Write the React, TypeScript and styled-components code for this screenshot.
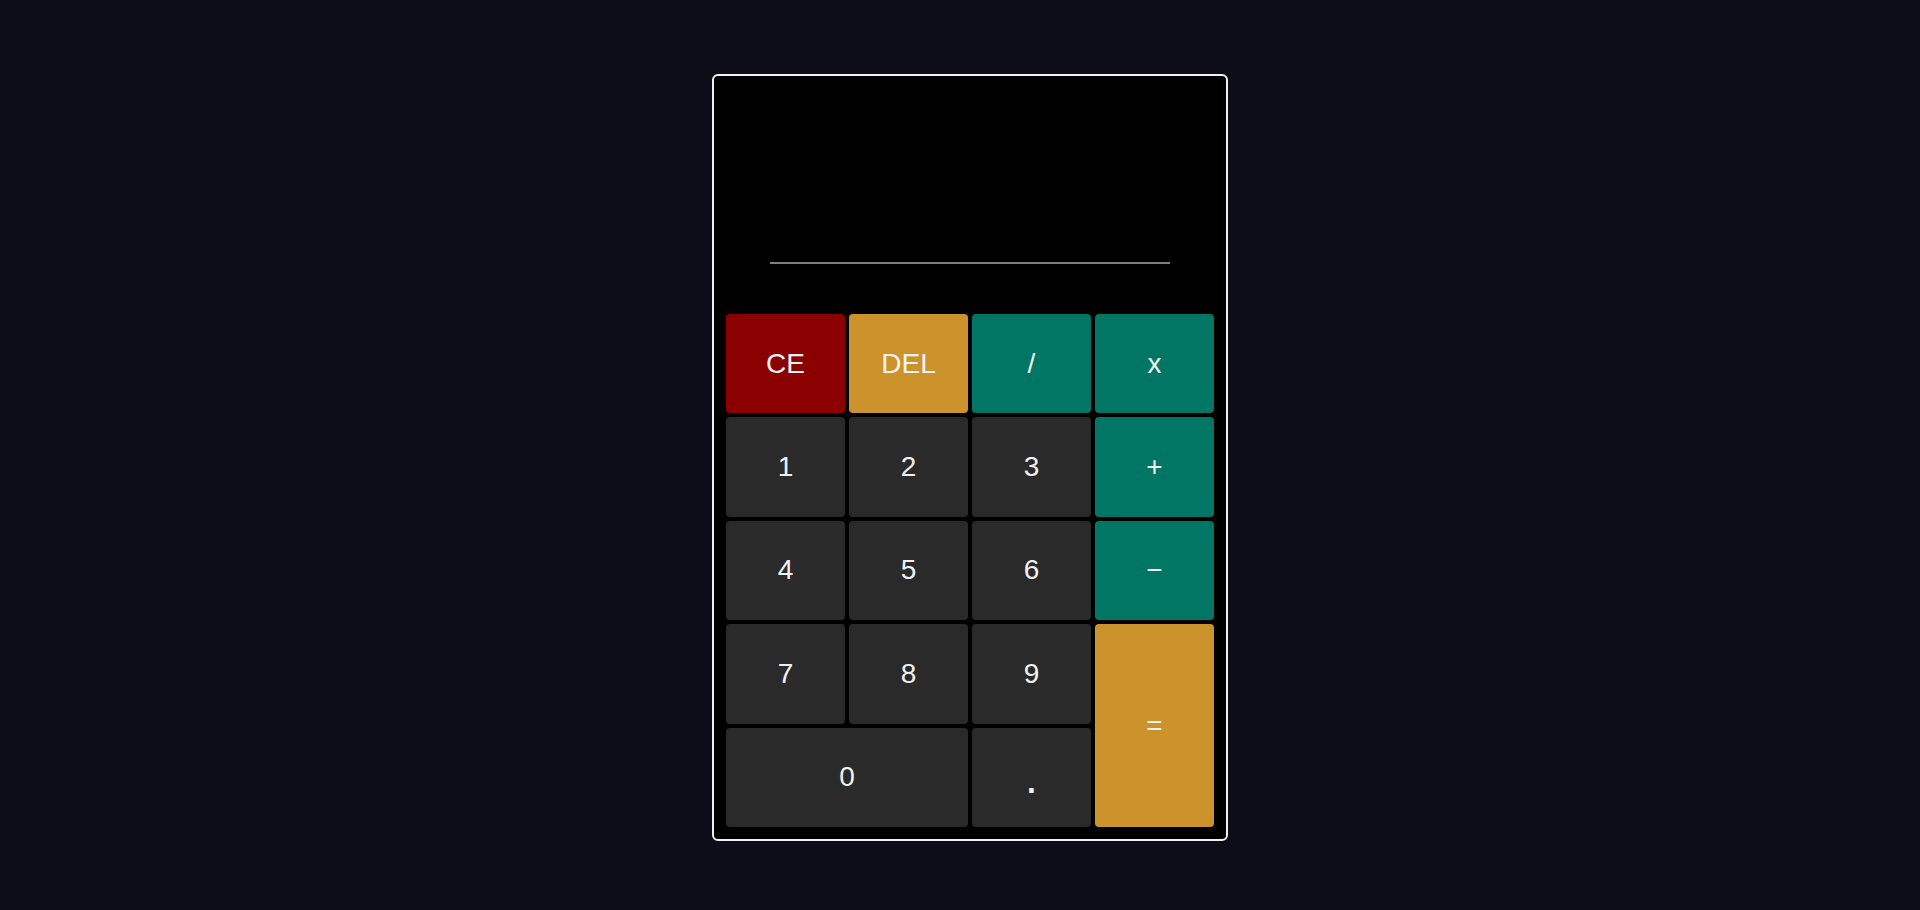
import styled, { createGlobalStyle } from "styled-components";

const GlobalStyle = createGlobalStyle`
  body {
    margin: 0;
    background: #0d0d1a;
    font-family: "Liberation Sans", Arial, sans-serif;
  }
`;

type Tone = "clear" | "gold" | "op" | "num";

const tones: Record<Tone, string> = {
  clear: "#8b0000",
  gold: "#cc922c",
  op: "#017664",
  num: "#2a2a2a",
};

const Page = styled.div`
  display: flex;
  justify-content: center;
  padding: 74px 0 0 20px;
`;

const Calculator = styled.div`
  width: 516px;
  height: 767px;
  background: #000;
  border: 2px solid #f2f2f2;
  border-radius: 6px;
  padding: 12px;
  box-sizing: border-box;
  display: flex;
  flex-direction: column;
`;

const Display = styled.div`
  height: 226px;
  display: flex;
  flex-direction: column;
  justify-content: flex-end;
  align-items: center;
  padding-bottom: 50px;
  box-sizing: border-box;
`;

const Screen = styled.div`
  width: 400px;
  height: 40px;
  border-bottom: 2px solid #7f7f7f;
  color: #fff;
  font-size: 28px;
  text-align: right;
`;

const Keys = styled.div`
  display: grid;
  grid-template-columns: repeat(4, 1fr);
  grid-template-rows: repeat(5, 1fr);
  gap: 4px;
  height: 513px;
`;

const Key = styled.button<{
  $tone: Tone;
  $wide?: boolean;
  $tall?: boolean;
  $big?: boolean;
}>`
  border: none;
  border-radius: 4px;
  background: ${(p) => tones[p.$tone]};
  color: #f2f2f2;
  font-family: "Liberation Sans", Arial, sans-serif;
  font-size: ${(p) => (p.$big ? "46px" : "28px")};
  padding: 0;
  cursor: pointer;
  grid-column: ${(p) => (p.$wide ? "span 2" : "auto")};
  grid-row: ${(p) => (p.$tall ? "span 2" : "auto")};
`;

export default function App() {
  return (
    <>
      <GlobalStyle />
      <Page>
        <Calculator>
          <Display>
            <Screen />
          </Display>
          <Keys>
            <Key $tone="clear">CE</Key>
            <Key $tone="gold">DEL</Key>
            <Key $tone="op">/</Key>
            <Key $tone="op">x</Key>
            <Key $tone="num">1</Key>
            <Key $tone="num">2</Key>
            <Key $tone="num">3</Key>
            <Key $tone="op">+</Key>
            <Key $tone="num">4</Key>
            <Key $tone="num">5</Key>
            <Key $tone="num">6</Key>
            <Key $tone="op">−</Key>
            <Key $tone="num">7</Key>
            <Key $tone="num">8</Key>
            <Key $tone="num">9</Key>
            <Key $tone="gold" $tall>
              =
            </Key>
            <Key $tone="num" $wide>
              0
            </Key>
            <Key $tone="num" $big>
              .
            </Key>
          </Keys>
        </Calculator>
      </Page>
    </>
  );
}
